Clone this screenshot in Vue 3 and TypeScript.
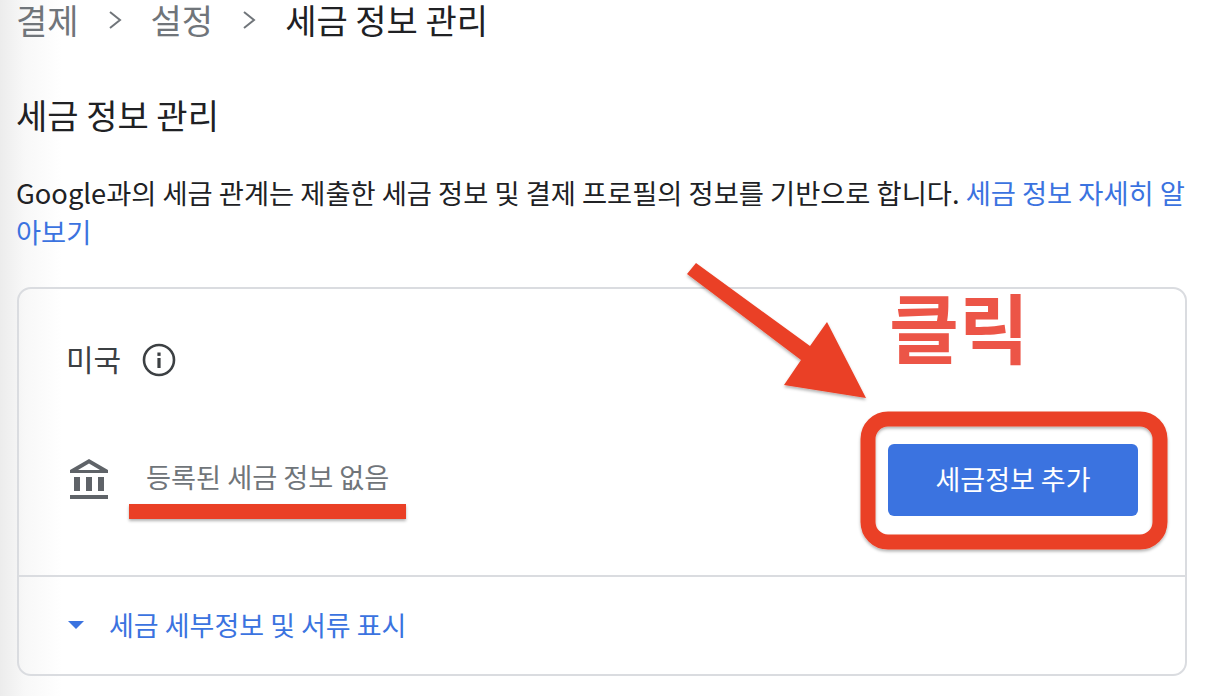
<script setup lang="ts">
const crumbs: string[] = ['결제', '설정']
</script>

<template>
  <div class="page">
    <nav class="crumbs">
      <template v-for="c in crumbs" :key="c">
        <span class="crumb">{{ c }}</span>
        <svg class="chev" width="14" height="22" viewBox="0 0 14 22"><path d="M2 3l10 8-10 8" fill="none" stroke="#70757a" stroke-width="2" /></svg>
      </template>
      <span class="crumb current">세금 정보 관리</span>
    </nav>
    <h1 class="title">세금 정보 관리</h1>
    <p class="desc">Google과의 세금 관계는 제출한 세금 정보 및 결제 프로필의 정보를 기반으로 합니다. <a class="link">세금 정보 자세히 알아보기</a></p>
    <section class="card">
      <div class="card-main">
        <div class="country">
          <span>미국</span>
          <svg class="info" width="34" height="34" viewBox="0 0 34 34"><circle cx="17" cy="17" r="15" fill="none" stroke="#3c4043" stroke-width="2.6" /><rect x="15.4" y="15" width="3.2" height="10" fill="#3c4043" /><rect x="15.4" y="9.5" width="3.2" height="3.4" fill="#3c4043" /></svg>
        </div>
        <div class="status-row">
          <div class="status">
            <svg width="40" height="42" viewBox="0 0 40 42"><path d="M20 1L39 12v3H1v-3zM20 5.500L9 12h22z" fill="#5f6368" fill-rule="evenodd" /><path d="M5 19h6v14H5zM17 19h6v14h-6zM29 19h6v14h-6zM1 37h38v4H1z" fill="#5f6368" /></svg>
            <span class="status-text">등록된 세금 정보 없음</span>
          </div>
          <button class="add">세금정보 추가</button>
        </div>
      </div>
      <div class="card-foot">
        <svg width="16" height="8" viewBox="0 0 16 8"><path d="M0 0h16L8 8z" fill="#3b73e0" /></svg>
        <span>세금 세부정보 및 서류 표시</span>
      </div>
    </section>
    <svg class="overlay" width="1212" height="696" viewBox="0 0 1212 696">
      <defs><filter id="sh" x="-10%" y="-10%" width="120%" height="120%"><feDropShadow dx="0" dy="2" stdDeviation="1.500" flood-color="#000" flood-opacity=".3" /></filter></defs>
      <g filter="url(#sh)">
        <path d="M696 263L810 346 827 322 866 398 784 385 801 360 687 274z" fill="#ea4026" />
        <rect x="129" y="504" width="277" height="15" fill="#ea4026" />
        <rect x="868" y="419" width="292" height="123" rx="20" fill="none" stroke="#ea4026" stroke-width="15" />
      </g>
    </svg>
    <div class="click">클릭</div>
  </div>
</template>

<style scoped>
.page {
  position: relative;
  width: 1212px;
  height: 696px;
  box-sizing: border-box;
  padding: 0 25px 0 16px;
  overflow: hidden;
  background: linear-gradient(90deg, #ececec 0, #f8f8f8 25px, #fff 62px);
  font-family: "Noto Sans CJK KR", "Noto Sans", sans-serif;
  color: #202124;
}
.crumbs {
  display: flex;
  align-items: center;
  height: 40px;
  gap: 29px;
}
.crumb {
  font-size: 34px;
  line-height: 40px;
  color: #70757a;
}
.crumb.current { color: #202124; }
.title {
  margin: 55px 0 0;
  font-size: 34px;
  font-weight: 400;
  line-height: 40px;
}
.desc {
  margin: 38px 0 0;
  font-size: 27.3px;
  line-height: 39px;
  color: #202124;
}
.link { color: #3b73e0; }
.card {
  margin: 36px 0 0 1px;
  width: 1170px;
  height: 389px;
  box-sizing: border-box;
  border: 2px solid #dadce0;
  border-radius: 14px;
  display: flex;
  flex-direction: column;
}
.card-main {
  flex: 1;
  padding: 49px 47px 0 47px;
  border-bottom: 2px solid #dadce0;
}
.country {
  display: flex;
  align-items: center;
  gap: 21px;
  height: 40px;
  font-size: 30px;
  color: #3c4043;
}
.info { margin-top: 4px; }
.status-row {
  display: flex;
  justify-content: space-between;
  align-items: center;
  margin-top: 66px;
}
.status {
  display: flex;
  align-items: center;
  gap: 40px;
}
.status svg { margin: 0 -3px 2px 3px; }
.status-text {
  font-size: 27.2px;
  color: #70757a;
  margin-bottom: 8px;
}
.add {
  width: 250px;
  height: 72px;
  border: none;
  border-radius: 6px;
  padding: 0 0 3px;
  background: #3b73e0;
  color: #fff;
  font: inherit;
  font-size: 27px;
}
.card-foot {
  height: 95px;
  padding: 0 0 2px 49px;
  display: flex;
  align-items: center;
  gap: 25px;
  color: #3b73e0;
  font-size: 27px;
}
.overlay {
  position: absolute;
  left: 0;
  top: 0;
  pointer-events: none;
}
.click {
  position: absolute;
  left: 889px;
  top: 281px;
  font-size: 76px;
  line-height: 88px;
  font-weight: 700;
  color: #ec5547;
}
</style>
